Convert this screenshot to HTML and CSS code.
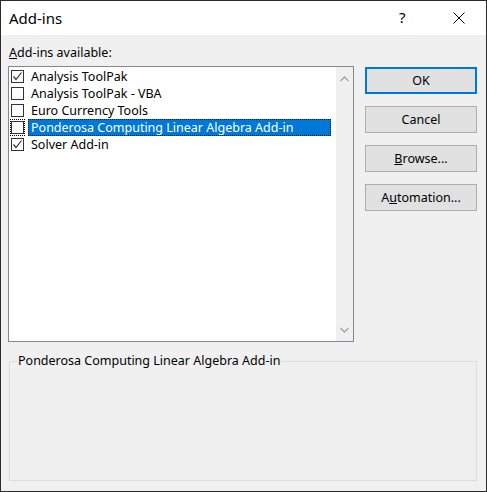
FILE: index.html
```html
<!DOCTYPE html>
<html>
<head>
<meta charset="utf-8">
<link rel="stylesheet" href="styles.css">
</head>
<body>
<div class="window">
  <div class="titlebar">
    <span class="title">Add-ins</span>
    <span class="help">?</span>
    <span class="close">
      <svg width="12" height="12" viewBox="0 0 12 12"><path d="M0.5 0.5 L11.5 11.5 M11.5 0.5 L0.5 11.5" stroke="#000" stroke-width="1" fill="none"/></svg>
    </span>
  </div>
  <div class="content">
    <div class="top">
      <div class="leftcol">
        <div class="label"><u>A</u>dd-ins available:</div>
        <div class="listbox">
          <div class="items">
            <div class="item"><span class="cb"><svg width="11" height="11" viewBox="0 0 11 11"><path d="M1.5 5.5 L4 8.5 L9.5 1.5" stroke="#333" stroke-width="1.2" fill="none"/></svg></span><span class="text">Analysis ToolPak</span></div>
            <div class="item"><span class="cb"></span><span class="text">Analysis ToolPak - VBA</span></div>
            <div class="item"><span class="cb"></span><span class="text">Euro Currency Tools</span></div>
            <div class="item selected"><span class="cbwrap"><span class="cb"></span></span><span class="text">Ponderosa Computing Linear Algebra Add-in</span></div>
            <div class="item"><span class="cb"><svg width="11" height="11" viewBox="0 0 11 11"><path d="M1.5 5.5 L4 8.5 L9.5 1.5" stroke="#333" stroke-width="1.2" fill="none"/></svg></span><span class="text">Solver Add-in</span></div>
          </div>
          <div class="scrollbar">
            <svg width="9" height="6" viewBox="0 0 9 6"><path d="M0.5 5 L4.5 1 L8.5 5" stroke="#a3a3a3" stroke-width="1.3" fill="none"/></svg>
            <svg width="9" height="6" viewBox="0 0 9 6"><path d="M0.5 1 L4.5 5 L8.5 1" stroke="#a3a3a3" stroke-width="1.3" fill="none"/></svg>
          </div>
        </div>
      </div>
      <div class="buttons">
        <div class="btn default">OK</div>
        <div class="btn">Cancel</div>
        <div class="btn"><u>B</u>rowse...</div>
        <div class="btn">A<u>u</u>tomation...</div>
      </div>
    </div>
    <fieldset class="group">
      <legend>Ponderosa Computing Linear Algebra Add-in</legend>
    </fieldset>
  </div>
</div>
</body>
</html>
```
FILE: styles.css
```css
html, body {
  margin: 0;
  padding: 0;
}
body {
  font-family: "Noto Sans", "Open Sans", sans-serif;
  font-size: 12.5px;
  color: #000;
}
.window {
  width: 487px;
  height: 492px;
  box-sizing: border-box;
  border: 1px solid #2b2b2b;
  background: #f0f0f0;
  display: flex;
  flex-direction: column;
}
.titlebar {
  height: 34px;
  background: #fff;
  display: flex;
  align-items: center;
  padding-left: 8px;
  flex-shrink: 0;
}
.title {
  font-size: 15px;
  flex: 1;
  margin-top: -1px;
}
.help {
  font-size: 15px;
  width: 12px;
  margin-right: 42px;
  margin-top: -2px;
}
.close {
  width: 12px;
  height: 12px;
  margin-right: 21px;
  display: flex;
}
.content {
  padding: 9px 9px 10px 7px;
  display: flex;
  flex-direction: column;
  flex: 1;
}
.top {
  display: flex;
  justify-content: space-between;
}
.leftcol {
  display: flex;
  flex-direction: column;
}
.label {
  line-height: 17px;
  margin-left: 1px;
  height: 22px;
}
.listbox {
  width: 346px;
  height: 276px;
  box-sizing: border-box;
  border: 1px solid #828790;
  background: #fff;
  display: flex;
}
.items {
  flex: 1;
  padding-top: 1px;
  padding-left: 2px;
  padding-right: 5px;
}
.item {
  height: 17px;
  display: flex;
  align-items: center;
}
.cb {
  width: 13px;
  height: 13px;
  box-sizing: border-box;
  border: 1px solid #333;
  background: #fff;
  display: flex;
  align-items: center;
  justify-content: center;
  flex-shrink: 0;
}
.cbwrap {
  width: 15px;
  height: 17px;
  box-sizing: border-box;
  border: 1px dotted #000;
  display: flex;
  align-items: center;
  justify-content: center;
  margin-left: -1px;
  margin-right: -1px;
}
.text {
  margin-left: 5px;
  padding-left: 2px;
  line-height: 17px;
  white-space: nowrap;
}
.selected .text {
  background: #0078d7;
  color: #fff;
  flex: 1;
  box-sizing: border-box;
  height: 17px;
  outline: 1px dotted #1a1a1a;
  outline-offset: -1px;
  margin-left: 4px;
  padding-left: 3px;
}
.scrollbar {
  width: 17px;
  background: #f0f0f0;
  display: flex;
  flex-direction: column;
  justify-content: space-between;
  align-items: center;
  padding: 9px 0 8px;
}
.buttons {
  display: flex;
  flex-direction: column;
  gap: 12px;
  padding-top: 23px;
  margin-right: 0;
}
.btn {
  width: 112px;
  height: 27px;
  box-sizing: border-box;
  border: 1px solid #adadad;
  background: #e1e1e1;
  display: flex;
  align-items: center;
  justify-content: center;
}
.btn.default {
  border: 2px solid #0078d7;
}
.group {
  margin: 12px 0 0 1px;
  padding: 0;
  border: 1px solid #dcdcdc;
  flex: 1;
  min-width: 0;
}
.group legend {
  padding: 0 1px;
  margin-left: 7px;
  line-height: 14px;
}
```
